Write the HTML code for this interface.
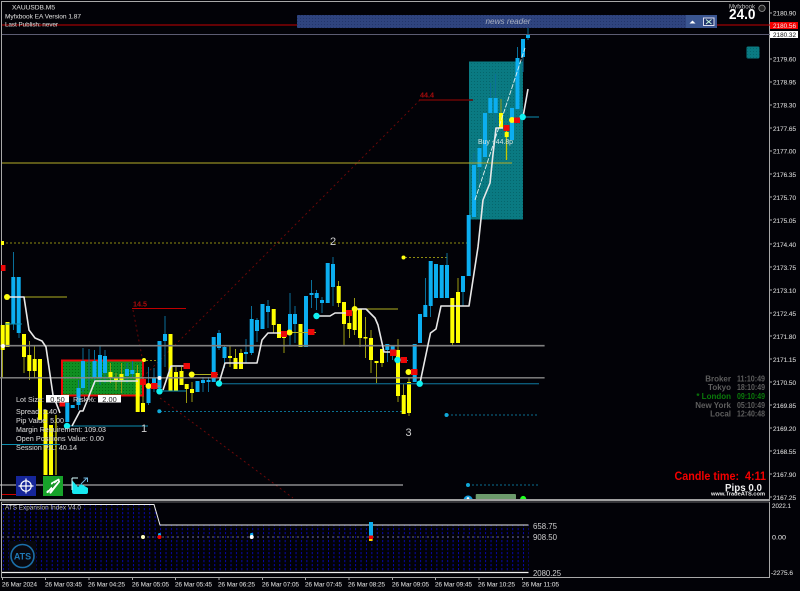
<!DOCTYPE html>
<html>
<head>
<meta charset="utf-8">
<title>XAUUSD chart</title>
<style>
html,body{margin:0;padding:0;background:#020207;width:800px;height:591px;overflow:hidden}
svg{display:block}
text{font-family:"Liberation Sans",sans-serif}
</style>
</head>
<body>
<svg width="800" height="591" viewBox="0 0 800 591" xmlns="http://www.w3.org/2000/svg">
<defs>
<pattern id="gd" width="5.417" height="4" patternUnits="userSpaceOnUse" x="1"><rect x="2" width="1" height="2.2" fill="#0707a8"/></pattern>
<pattern id="gh" width="3" height="3" patternUnits="userSpaceOnUse"><rect width="3" height="3" fill="#0a7a82"/><rect width="1" height="1" fill="#05666c"/></pattern>
<pattern id="gg" width="3" height="3" patternUnits="userSpaceOnUse"><rect width="3" height="3" fill="#0f8f22"/><rect width="1" height="1" fill="#056a12"/></pattern>
<pattern id="gb" width="3" height="3" patternUnits="userSpaceOnUse"><rect width="3" height="3" fill="#2f447f"/><rect width="1" height="1" fill="#22356a"/></pattern>
<clipPath id="sub"><path d="M2 505H154L160 525H529V572H2Z"/></clipPath>
</defs>
<rect width="800" height="591" fill="#020207"/>

<!-- frame -->
<path d="M1 1.5H770M1.5 1V500M769.5 1V500" stroke="#a8a8a8" stroke-width="1" fill="none"/>

<!-- boxes -->
<rect x="469" y="61.5" width="54" height="158" fill="url(#gh)"/>
<rect x="62" y="360.5" width="81" height="35" fill="url(#gg)" stroke="#ee0a0a" stroke-width="2"/>

<!-- zigzag -->
<path d="M420 100L143 377M133 310L143 362M160 398L293 498" stroke="#6a0808" stroke-width="1" stroke-dasharray="2 3" fill="none"/>
<path d="M419 100H473" stroke="#6a0505" stroke-width="1.6"/>
<path d="M132 308.5H186" stroke="#c00000" stroke-width="1"/>
<path d="M2 243H468" stroke="#8f8c10" stroke-width="1" stroke-dasharray="2 2"/>
<path d="M405 257.5H447M146 360.5H158" stroke="#8f8c10" stroke-width="1" stroke-dasharray="2 2"/>
<path d="M160 411.5H404M447 415H539M468 485H539" stroke="#0a6f90" stroke-width="1" stroke-dasharray="2 2"/>

<!-- wicks -->
<path stroke="#0a6f9a" stroke-width="1" fill="none" d="M13.5 252V330M19 277V338M83 348V392M78.5 380V410M89 349V390M94.5 350V385M100 345V385M105 350V383M127 363V383M132.5 361V378M148.5 367V405M154 368V392M165 316V367M203 377V392M208.5 377V392M219 330V350M224.5 345V368M246 339V363M251.5 306V355M257 318V342M268 300V328M290 293V345M295 306V343M311.5 280V308M316.5 290V310M322 297V313M333 257V306M387.5 344V362M392.5 346V360M425.5 278V317M430.5 261V317M447 253V298M463 276V306M474 153V217M479.5 148V182M490.5 83V113M495.5 74V123M517.5 47V110M523 39V72M528 28V40"/>
<path stroke="#9a9a10" stroke-width="1" fill="none" d="M2.5 325V378M24 334V373M29.5 341V380M34.5 345V378M110.5 363V383M116 373V390M121.5 363V393M137.5 365V412M143 396V412M176 367V391M181.5 367V385M186.5 384V403M192 382V402M230 346V367M235.5 349V369M241 349V369M273.5 309V333M284 332V353M338.5 281V307M344 302V345M349.5 313V338M354.5 298V335M360 309V347M365.5 317V358M371 330V373M376.5 361V383M382 349V367M398 339V402M403.5 384V414M409 377V416M452.5 298V346M458 278V343M501 99V128"/>
<path stroke="#c8c800" stroke-width="1.3" fill="none" d="M56 415V475M506.5 128V160"/>

<!-- bodies -->
<path stroke="#0caef0" stroke-width="4" fill="none" d="M13.3 277V324M18.7 277V333M67.3 403V422M72.7 405V408M78.5 388V405M83 361V388M94.5 361V377M100 355V378M105 356V373M127 369V376M132.3 370V374M148.5 387V403M154 378V388M159.5 341V388M165 334V341M197.5 381V392M203 380V383M208.5 380V382M213.7 337V382M219 333V348M224.5 347V358M246 352V354M251.7 319V353M257 320V331M262.5 304V329M268 306V312M290 314V331M295 314V324M306 296V347M311.5 293V295M316.7 293V298M322 300V303M327.7 263V303M333 264V287M387.3 344V350M392.7 346V352M414.7 344V382M420 314V343M425.3 305V317M430.7 261V306M436 264V298M441.7 265V298M447 265V298M463 276V292M468.7 215V276M474 165V217M479.5 148V167M485 113V157M490.3 98V113M495.7 98V113M512 108V140M517.5 58V109M523 39V57M528 34V38"/>
<path stroke="#ffff00" stroke-width="4" fill="none" d="M2.7 325V350M7.5 322V347M24 334V357M29.3 355V371M34.7 359V371M40 359V420M45.5 410V475M51 425V475M110.5 372V378M116 378V380M121.5 374V380M137.7 373V412M143 403V412M170.5 334V391M176 372V391M181.5 371V385M186.7 384V389M192 389V393M230 356V358M235.5 358V369M241 353V369M273.7 309V325M279 324V338M284 332V338M300.5 324V347M338.7 286V303M344 302V324M349.3 323V329M354.7 309V330M360 309V338M365.5 337V338.5M371 338V360M376.5 361V363M382 349V363M398 350V396M403.7 395V414M409 382V413M452.3 298V343M458 292V343M501 113V128M506.7 132V137"/>

<!-- horizontals -->
<path d="M2 163H512" stroke="#b5ae2a" stroke-width="1"/>
<path d="M0 345.7H544.6" stroke="#808080" stroke-width="1.6"/>
<path d="M0 377.8H544.6" stroke="#8a8a8a" stroke-width="1.3"/>
<path d="M219 383.7H539" stroke="#0b5a78" stroke-width="1.4"/>
<path d="M0 485H403" stroke="#cfcfcf" stroke-width="1"/>
<path d="M2 25H297M717 25H770" stroke="#c40000" stroke-width="1"/>
<path d="M2 34.5H770" stroke="#5c5c72" stroke-width="1"/>
<path d="M67 426H148M2 444.5H60M159 391H186M397 360.5H408M522 117H539M5 324H22" stroke="#0c8fb0" stroke-width="1"/>
<path d="M7 297H67M354 309H398M289 332.5H316M191 374.5H218M148 386H160" stroke="#b0b020" stroke-width="1"/>
<path d="M2 494.5H29" stroke="#d00000" stroke-width="1"/>

<!-- white trend -->
<path fill="none" stroke="#e8e8e8" stroke-width="1.6" stroke-linejoin="round" d="M7 297H24L29 330L35 338L42 341L46 347L53 395L60 413M72 426L80 411H83L95 381H138M163 390L171 366H185M219 383L225 363H257L262 340L268 333H282M316 316H330L335 313H352M356 309H366L375 318L378 325L384 352H396M420 383L430.5 333L436 329L441 306H469L478 247L483 200L490 183L492.7 157L496 128H503M523 117L528 89"/>
<path fill="none" stroke="#e0f0f0" stroke-width="0.9" stroke-dasharray="5 1.5" d="M475 200L525 48"/>

<!-- dots -->
<g fill="#ffff10">
<circle cx="7" cy="297" r="3"/><circle cx="148.5" cy="386" r="3"/><circle cx="191.7" cy="374.5" r="3"/><circle cx="289.5" cy="332.5" r="3"/><circle cx="354.7" cy="309" r="3"/><circle cx="408.5" cy="372" r="3"/><circle cx="512" cy="120" r="3"/><circle cx="403.5" cy="257.5" r="2"/><circle cx="144" cy="360" r="2"/><rect x="1" y="241" width="3" height="4"/>
</g>
<g fill="#10f0f0">
<circle cx="67" cy="426" r="3.2"/><circle cx="159.5" cy="391.3" r="3.2"/><circle cx="219" cy="383.5" r="3.2"/><circle cx="316.5" cy="316" r="3.2"/><circle cx="397.5" cy="360" r="3.2"/><circle cx="419.7" cy="383.7" r="3.2"/><circle cx="522.7" cy="117" r="3.2"/>
</g>
<g fill="#10a8d8">
<circle cx="159.3" cy="411.3" r="2"/><circle cx="446.5" cy="415" r="2"/><circle cx="468" cy="485" r="2"/>
</g>
<g fill="#fff"><circle cx="3" cy="346" r="2"/><circle cx="159.5" cy="378" r="2"/></g>
<g fill="#ee0808">
<rect x="1" y="265" width="4.5" height="6"/><rect x="140" y="379" width="6" height="6"/><rect x="151" y="383" width="6.5" height="6"/><rect x="183.5" y="363" width="6.5" height="6"/><rect x="211" y="372" width="6.5" height="5.5"/><rect x="281" y="331" width="6" height="6"/><rect x="308" y="329" width="6.5" height="6"/><rect x="346" y="310" width="6" height="6"/><rect x="390" y="349.5" width="6.5" height="6.5"/><rect x="400.5" y="357" width="6.5" height="6"/><rect x="411" y="369" width="6.5" height="6"/><rect x="503.5" y="125" width="6" height="6"/><rect x="514" y="117.5" width="6" height="5.5"/><rect x="59.5" y="401" width="5.5" height="5.5"/>
</g>

<!-- news bar -->
<rect x="297" y="15" width="420" height="13" fill="url(#gb)"/>
<rect x="686" y="15" width="16" height="13" fill="#3a5590"/>
<rect x="702" y="15" width="15" height="13" fill="#3a5590"/>
<path d="M689.5 23.5L692.5 20.5L695.5 23.5Z" fill="#fff"/>
<rect x="703.5" y="18" width="10.5" height="7.5" fill="#24376f" stroke="#dde" stroke-width="1"/>
<path d="M706 19.5L711.5 24M711.5 19.5L706 24" stroke="#cfd" stroke-width="0.9"/>
<text x="485.5" y="24" font-size="8.6" font-style="italic" fill="#a8afc0" textLength="45" lengthAdjust="spacingAndGlyphs">news reader</text>

<!-- top right -->
<text x="729" y="8.5" font-size="6" fill="#c8c8c8" textLength="26" lengthAdjust="spacingAndGlyphs">Myfxbook</text>
<text x="729" y="19" font-size="15" font-weight="bold" fill="#fff" textLength="26.5" lengthAdjust="spacingAndGlyphs">24.0</text>
<circle cx="762" cy="8.3" r="3.2" fill="#222" stroke="#999" stroke-width="0.8"/>
<rect x="746.5" y="46.5" width="13" height="12" rx="1.5" fill="url(#gh)"/>

<!-- top-left text -->
<g fill="#c8c8c8" font-size="6.6" stroke="#c8c8c8" stroke-width="0.12">
<text x="12" y="9.5" textLength="43" lengthAdjust="spacingAndGlyphs">XAUUSDB.M5</text>
<text x="5" y="18.5" textLength="76" lengthAdjust="spacingAndGlyphs">Myfxbook EA Version 1.87</text>
<text x="5" y="26.5" textLength="53" lengthAdjust="spacingAndGlyphs">Last Publish: never</text>
</g>

<text x="420" y="97.5" font-size="7.5" font-weight="bold" fill="#a80c0c" textLength="14" lengthAdjust="spacingAndGlyphs">44.4</text>
<text x="133" y="306.5" font-size="7.5" font-weight="bold" fill="#a80c0c" textLength="14" lengthAdjust="spacingAndGlyphs">14.5</text>
<text x="478" y="144" font-size="7.2" fill="#d4e4e4" textLength="35" lengthAdjust="spacingAndGlyphs">Buy +44.8p</text>
<text x="333" y="245" font-size="11" fill="#d0d0d0" text-anchor="middle">2</text>
<text x="144" y="432" font-size="11" fill="#d0d0d0" text-anchor="middle">1</text>
<text x="408.5" y="436" font-size="11" fill="#d0d0d0" text-anchor="middle">3</text>

<!-- trade panel -->
<g fill="#c4c4c4" font-size="7.6" stroke="#c4c4c4" stroke-width="0.12">
<text x="16" y="402" textLength="28" lengthAdjust="spacingAndGlyphs">Lot Size:</text>
<text x="73" y="402" textLength="23" lengthAdjust="spacingAndGlyphs">Risk%:</text>
<text x="16" y="414" textLength="41" lengthAdjust="spacingAndGlyphs">Spread: 2.40</text>
<text x="16" y="423" textLength="48" lengthAdjust="spacingAndGlyphs">Pip Value: 5.00</text>
<text x="16" y="432" textLength="90" lengthAdjust="spacingAndGlyphs">Margin Requirement: 109.03</text>
<text x="16" y="441" textLength="88" lengthAdjust="spacingAndGlyphs">Open Positions Value: 0.00</text>
<text x="16" y="450" textLength="61" lengthAdjust="spacingAndGlyphs">Session P/L: 40.14</text>
</g>
<rect x="46" y="395" width="23" height="7.5" fill="#fff"/>
<rect x="98" y="395" width="23" height="7.5" fill="#fff"/>
<text x="57.5" y="401.8" font-size="7.4" fill="#222" text-anchor="middle">0.50</text>
<text x="109.5" y="401.8" font-size="7.4" fill="#222" text-anchor="middle">2.00</text>

<!-- buttons -->
<rect x="16" y="476" width="20" height="20" fill="#16269a"/>
<g stroke="#fff" stroke-width="1.2" fill="none"><circle cx="26" cy="486" r="5.2"/><path d="M26 478.5V493.5M18.5 486H33.5"/></g>
<rect x="43" y="476" width="20" height="20" fill="#17a22a"/>
<path d="M47.5 492L51.5 488M52 483.5L58.5 479.8M50.5 492.5L59 481.5" stroke="#fff" stroke-width="2.2" fill="none" stroke-linecap="round"/>
<path d="M48 490L54 483M52 488L58 481" stroke="#1a8a2a" stroke-width="0.9"/>
<path d="M72 478V492Q72 494 74 494H86Q88 494 88 492V488L81 484L78 487L72 480Z" fill="#17e8f0"/>
<path d="M72 478V490M72 478H78" stroke="#d8ffff" stroke-width="1" fill="none"/>
<path d="M81 484L87 478M83.5 478H87.5V482" stroke="#6fb5dd" stroke-width="1" fill="none"/>

<!-- bottom indicators -->
<path d="M463.5 499.5A4.7 5 0 0 1 472.7 499.5Z" fill="#16a0e0"/>
<circle cx="468" cy="498.4" r="1.3" fill="#fff"/>
<rect x="475.7" y="494" width="40.3" height="5.5" rx="1" fill="#6c9a6c"/>
<path d="M520 499.5A3.2 3.6 0 0 1 526.4 499.5Z" fill="#20ff20"/>

<!-- session clocks -->
<g font-size="8" font-weight="bold" fill="#5e5e5e">
<text x="731" y="381.5" text-anchor="end">Broker</text>
<text x="731" y="390" text-anchor="end">Tokyo</text>
<text x="731" y="399" text-anchor="end" fill="#0a7a0a">* London</text>
<text x="731" y="408" text-anchor="end">New York</text>
<text x="731" y="416.5" text-anchor="end">Local</text>
<text x="737" y="381.5" textLength="28" lengthAdjust="spacingAndGlyphs">11:10:49</text>
<text x="737" y="390" textLength="28" lengthAdjust="spacingAndGlyphs">18:10:49</text>
<text x="737" y="399" textLength="28" lengthAdjust="spacingAndGlyphs" fill="#0a7a0a">09:10:49</text>
<text x="737" y="408" textLength="28" lengthAdjust="spacingAndGlyphs">05:10:49</text>
<text x="737" y="416.5" textLength="28" lengthAdjust="spacingAndGlyphs">12:40:48</text>
</g>
<text x="674.5" y="480" font-size="11.5" font-weight="bold" fill="#f40000" textLength="91.5" lengthAdjust="spacingAndGlyphs" xml:space="preserve">Candle time:  4:11</text>
<text x="725" y="491" font-size="10.5" font-weight="bold" fill="#eee" textLength="37" lengthAdjust="spacingAndGlyphs">Pips 0.0</text>
<text x="711" y="495.5" font-size="5.2" font-weight="bold" fill="#eee" textLength="54" lengthAdjust="spacingAndGlyphs">www.TradeATS.com</text>

<!-- price scale -->
<path stroke="#a8a8a8" stroke-width="1" d="M770 13H772M770 59H772M770 82H772M770 105H772M770 128H772M770 151H772M770 174H772M770 197H772M770 220H772M770 244H772M770 267H772M770 290H772M770 313H772M770 336H772M770 359H772M770 382H772M770 405H772M770 428H772M770 451H772M770 474H772M770 497H772"/>
<g font-size="6.8" fill="#d0d0d0" stroke="#d0d0d0" stroke-width="0.12">
<text x="773" y="15.5" textLength="23" lengthAdjust="spacingAndGlyphs">2180.90</text>
<text x="773" y="61.5" textLength="23" lengthAdjust="spacingAndGlyphs">2179.60</text>
<text x="773" y="84.5" textLength="23" lengthAdjust="spacingAndGlyphs">2178.95</text>
<text x="773" y="107.5" textLength="23" lengthAdjust="spacingAndGlyphs">2178.30</text>
<text x="773" y="131" textLength="23" lengthAdjust="spacingAndGlyphs">2177.65</text>
<text x="773" y="153.5" textLength="23" lengthAdjust="spacingAndGlyphs">2177.00</text>
<text x="773" y="177" textLength="23" lengthAdjust="spacingAndGlyphs">2176.35</text>
<text x="773" y="200" textLength="23" lengthAdjust="spacingAndGlyphs">2175.70</text>
<text x="773" y="223" textLength="23" lengthAdjust="spacingAndGlyphs">2175.05</text>
<text x="773" y="247" textLength="23" lengthAdjust="spacingAndGlyphs">2174.40</text>
<text x="773" y="270" textLength="23" lengthAdjust="spacingAndGlyphs">2173.75</text>
<text x="773" y="293" textLength="23" lengthAdjust="spacingAndGlyphs">2173.10</text>
<text x="773" y="316" textLength="23" lengthAdjust="spacingAndGlyphs">2172.45</text>
<text x="773" y="339" textLength="23" lengthAdjust="spacingAndGlyphs">2171.80</text>
<text x="773" y="362" textLength="23" lengthAdjust="spacingAndGlyphs">2171.15</text>
<text x="773" y="385" textLength="23" lengthAdjust="spacingAndGlyphs">2170.50</text>
<text x="773" y="408" textLength="23" lengthAdjust="spacingAndGlyphs">2169.85</text>
<text x="773" y="431" textLength="23" lengthAdjust="spacingAndGlyphs">2169.20</text>
<text x="773" y="454" textLength="23" lengthAdjust="spacingAndGlyphs">2168.55</text>
<text x="773" y="477" textLength="23" lengthAdjust="spacingAndGlyphs">2167.90</text>
<text x="773" y="500" textLength="23" lengthAdjust="spacingAndGlyphs">2167.25</text>
<text x="772" y="508" textLength="19" lengthAdjust="spacingAndGlyphs">2022.1</text>
<text x="772" y="539.5" textLength="14" lengthAdjust="spacingAndGlyphs">0.00</text>
<text x="771" y="575" textLength="22" lengthAdjust="spacingAndGlyphs">-2275.6</text>
</g>
<rect x="770" y="22" width="28" height="7" fill="#f00000"/>
<rect x="770" y="31" width="28" height="7" fill="#fff"/>
<text x="773" y="28" font-size="6.8" fill="#eee" textLength="23" lengthAdjust="spacingAndGlyphs">2180.56</text>
<text x="773" y="37" font-size="6.8" fill="#111" textLength="23" lengthAdjust="spacingAndGlyphs">2180.32</text>

<!-- separator -->
<rect x="0" y="499" width="770" height="2" fill="#a0a0a0"/>
<path d="M1 502H770" stroke="#8a8a8a" stroke-width="0.8"/>

<!-- sub window -->
<rect x="2" y="505" width="527" height="67" fill="url(#gd)" clip-path="url(#sub)"/>
<path d="M2 537H529" stroke="#6a6a6a" stroke-width="1" stroke-dasharray="2 3"/>
<path d="M2 504.5H154L160 525H528.5" stroke="#eee" stroke-width="1" fill="none"/>
<path d="M2 572.5H528.5" stroke="#eee" stroke-width="1.2"/>
<path d="M1.5 502V577M769.5 502V577M1 577.5H770" stroke="#a8a8a8" stroke-width="1" fill="none"/>
<circle cx="143" cy="537" r="2" fill="#ffffc0"/>
<circle cx="159.5" cy="534.5" r="1.5" fill="#0caef0"/><circle cx="159.5" cy="537" r="2" fill="#f00000"/>
<circle cx="251.7" cy="534.5" r="1.6" fill="#0caef0"/><circle cx="251.7" cy="537" r="2" fill="#fff"/>
<rect x="369" y="522" width="4" height="15" fill="#0caef0"/><rect x="369" y="538" width="3.6" height="3" fill="#ffd000"/><rect x="369" y="535.5" width="4" height="3.5" fill="#f00000"/>
<text x="5" y="509.5" font-size="6.8" fill="#c0c0c0" textLength="76" lengthAdjust="spacingAndGlyphs">ATS Expansion Index V4.0</text>

<!-- ATS logo -->
<rect x="9" y="541" width="27" height="29" fill="#08080e"/>
<circle cx="22.5" cy="556" r="11.5" fill="none" stroke="#1b6fa8" stroke-width="1.6"/>
<text x="22.5" y="559.5" font-size="9" font-weight="bold" fill="#1f78b4" text-anchor="middle">ATS</text>

<g font-size="8" fill="#d0d0d0">
<text x="533" y="528.8" textLength="24" lengthAdjust="spacingAndGlyphs">658.75</text>
<text x="533" y="540.2" textLength="24" lengthAdjust="spacingAndGlyphs">908.50</text>
<text x="533" y="576" textLength="28" lengthAdjust="spacingAndGlyphs">2080.25</text>
</g>

<!-- time axis -->
<path stroke="#a8a8a8" stroke-width="1" d="M2.5 577V580M45.5 577V580M89 577V580M132.5 577V580M175.5 577V580M219 577V580M262.5 577V580M305.5 577V580M349 577V580M392.5 577V580M435.5 577V580M479 577V580M522.5 577V580"/>
<g font-size="6.8" fill="#d0d0d0" stroke="#d0d0d0" stroke-width="0.12">
<text x="2" y="586.5" textLength="35" lengthAdjust="spacingAndGlyphs">26 Mar 2024</text>
<text x="45" y="586.5" textLength="37" lengthAdjust="spacingAndGlyphs">26 Mar 03:45</text>
<text x="88" y="586.5" textLength="37" lengthAdjust="spacingAndGlyphs">26 Mar 04:25</text>
<text x="132" y="586.5" textLength="37" lengthAdjust="spacingAndGlyphs">26 Mar 05:05</text>
<text x="175" y="586.5" textLength="37" lengthAdjust="spacingAndGlyphs">26 Mar 05:45</text>
<text x="218" y="586.5" textLength="37" lengthAdjust="spacingAndGlyphs">26 Mar 06:25</text>
<text x="262" y="586.5" textLength="37" lengthAdjust="spacingAndGlyphs">26 Mar 07:05</text>
<text x="305" y="586.5" textLength="37" lengthAdjust="spacingAndGlyphs">26 Mar 07:45</text>
<text x="348" y="586.5" textLength="37" lengthAdjust="spacingAndGlyphs">26 Mar 08:25</text>
<text x="392" y="586.5" textLength="37" lengthAdjust="spacingAndGlyphs">26 Mar 09:05</text>
<text x="435" y="586.5" textLength="37" lengthAdjust="spacingAndGlyphs">26 Mar 09:45</text>
<text x="478" y="586.5" textLength="37" lengthAdjust="spacingAndGlyphs">26 Mar 10:25</text>
<text x="522" y="586.5" textLength="37" lengthAdjust="spacingAndGlyphs">26 Mar 11:05</text>
</g>
</svg>
</body>
</html>
